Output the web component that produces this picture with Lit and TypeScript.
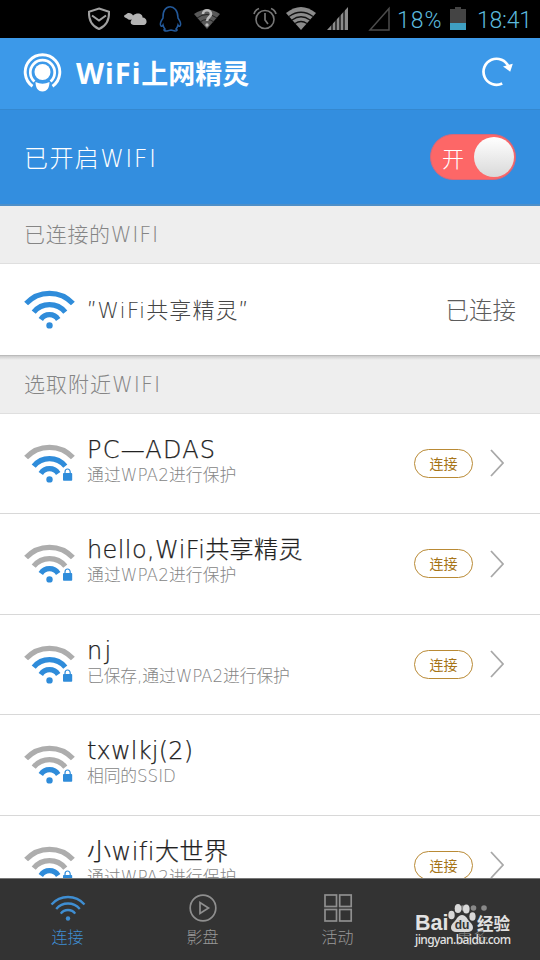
import { LitElement, html, css, svg, nothing } from "lit";
import { customElement, property } from "lit/decorators.js";

const arc = (r: number, dx: number, cx = 25.5, cy = 36) => {
  const y = (cy - Math.sqrt(r * r - dx * dx)).toFixed(2);
  return `M${cx - dx} ${y}A${r} ${r} 0 0 1 ${cx + dx} ${y}`;
};

@customElement("wifi-signal")
class WifiSignal extends LitElement {
  @property({ type: Number }) level = 3;
  @property({ type: Boolean }) locked = false;
  static styles = css`
    :host { display: block; width: 52px; height: 42px; flex: none; }
    svg { display: block; }
  `;
  render() {
    const on = "#2f8cda", off = "#adadad";
    const c = (n: number) => (this.level >= n ? on : off);
    return html`<svg width="52" height="42" viewBox="0 0 52 42" fill="none" stroke-width="5.2">
      <path d=${arc(31.7, 23.4)} stroke=${c(3)} />
      <path d=${arc(20.4, 15.8)} stroke=${c(2)} />
      <path d=${arc(10.3, 8.7)} stroke=${c(1)} />
      <circle cx="25.5" cy="36.4" r="3.2" fill=${on} />
      ${this.locked
        ? svg`<rect x="39" y="30" width="9.2" height="7.800" rx=".8" fill=${on} />
            <path d="M41 30.500v-1.600a2.600 2.900 0 0 1 5.200 0v1.600" stroke=${on} stroke-width="1.200" />`
        : nothing}
    </svg>`;
  }
}

interface Network {
  name: string;
  note: string;
  level: number;
  connect: boolean;
  spacing: number;
  noteSpacing: number;
}

const networks: Network[] = [
  { name: "PC—ADAS", note: "通过WPA2进行保护", level: 2, connect: true, spacing: 1.2, noteSpacing: 0.1 },
  { name: "hello,WiFi共享精灵", note: "通过WPA2进行保护", level: 1, connect: true, spacing: 0.4, noteSpacing: 0.1 },
  { name: "nj", note: "已保存,通过WPA2进行保护", level: 2, connect: true, spacing: 2.2, noteSpacing: -0.1 },
  { name: "txwlkj(2)", note: "相同的SSID", level: 1, connect: false, spacing: 0.2, noteSpacing: -0.1 },
  { name: "小wifi大世界", note: "通过WPA2进行保护", level: 1, connect: true, spacing: 0.5, noteSpacing: 0.1 },
];

@customElement("app-root")
class AppRoot extends LitElement {
  static styles = css`
    :host {
      display: flex; flex-direction: column; position: relative;
      width: 540px; height: 960px; overflow: hidden; background: #fff;
      font-family: "DejaVu Sans Light", "DejaVu Sans", "Noto Sans CJK SC", sans-serif;
      font-weight: 200;
    }
    * { box-sizing: border-box; }
    svg { display: block; flex: none; }
    .status { height: 37.5px; flex: none; background: #000; display: flex; align-items: center; color: #5cb9dc;
      font: 300 23px/37px Roboto, sans-serif; white-space: nowrap; }
    .pct { width: 46px; margin-left: 6px; letter-spacing: 1px; padding-top: 3px; }
    .charge { margin-left: 7px; }
    .time { margin-left: 11px; letter-spacing: -.2px; padding-top: 3px; }
    .top { height: 72px; flex: none; background: #3c99e9; border-bottom: 1.5px solid #3488d0; display: flex;
      align-items: center; padding: 0 27px 0 23px; color: #fff; }
    .brand { flex: 1; margin-left: 14px; font: 700 27px/40px "Noto Sans", "Noto Sans CJK SC", sans-serif; }
    .latin { font-size: 29px; letter-spacing: 1px; }
    .power { height: 96px; flex: none; background: #338edf; border-bottom: 2px solid #4e8fc8; display: flex;
      align-items: center; justify-content: space-between; padding: 0 24px; color: #fff; font-size: 24px; letter-spacing: 1.4px; }
    .switch { width: 86px; height: 46px; border-radius: 23px; background: #fd6767; border: 1.5px solid #d4687c; display: flex;
      align-items: center; justify-content: space-between; padding: 0 1px 0 11px; font-size: 22px; letter-spacing: 0; font-weight: 300; }
    .knob { width: 40px; height: 40px; border-radius: 50%; background: linear-gradient(#fff, #d9d9d9); }
    .section { height: 58px; flex: none; background: #eee; border-bottom: 1px solid #dfdfdf; padding-left: 24px;
      line-height: 59px; font-size: 21px; letter-spacing: .7px; color: #858585; }
    .section.near { background: linear-gradient(#ccc, #eee 4px); letter-spacing: 1px; }
    .current { height: 92px; flex: none; display: flex; align-items: center; padding: 1px 24px 0; color: #444;
      font-size: 22px; border-bottom: 1px solid #bbb; }
    .current .ssid { flex: 1; margin: -3px 0 0 11px; letter-spacing: 1.1px; }
    .state { font-size: 23.5px; color: #5c5c5c; margin-top: -2px; }
    .list { flex: 1; min-height: 0; overflow: hidden; }
    .row { height: 100.5px; border-bottom: 1.5px solid #d8d8d8; display: flex; align-items: center; padding: 0 36px 0 24px; }
    .row wifi-signal { margin-top: 1px; }
    .texts { flex: 1; margin-left: 11px; white-space: nowrap; }
    .name { font-size: 24px; line-height: 28px; color: #222; margin-top: -5px; -webkit-text-stroke: .25px #222; }
    .note { font-size: 16.8px; line-height: 22px; color: #858585; }
    .join { width: 59px; height: 29px; border: 1px solid #b98a35; border-radius: 15px; color: #a67416; font-size: 14px;
      font-weight: 400; line-height: 28px; text-align: center; margin-right: 17px; }
    .nav { height: 82.500px; flex: none; background: #333; border-top: 1px solid #777; display: grid; grid-template-columns: repeat(4, 1fr);
      color: #999; font-size: 16px; }
    .tab { display: flex; flex-direction: column; align-items: center; padding-top: 12px; gap: 1px; }
    .tab span { line-height: 24px; }
    .active { color: #3f8ed2; }
    .dim { color: #777; }
    .mark { position: absolute; left: 415px; top: 900px; width: 100px; color: #e2e2e2; }
    .markrow { display: flex; align-items: flex-end; height: 34px; white-space: nowrap; }
    .bai { font: 700 21.5px/22px "Liberation Sans", sans-serif; width: 33px; }
    .exp { font: 700 16.5px/22px "Noto Sans CJK SC", sans-serif; margin-left: 1px; }
    .site { font: 500 12px/16px "Noto Sans", sans-serif; letter-spacing: -.6px; margin-top: -2px; }
  `;

  statusIcons() {
    return html`<svg width="391" height="37" viewBox="0 0 391 37" fill="none">
      <path d="M99 8.5l10 3.2c.4 8-2.5 14-10 17.3-7.500-3.300-10.400-9.300-10-17.300z" stroke="#a0a0a0" stroke-width="2" />
      <path d="M92 15.500l7 5 7-5" stroke="#a0a0a0" stroke-width="2" />
      <path d="M134 25c-4 0-4-4-2-5.500-3 1-4-.5-6-1.500-3-1-2-3 0-3.500 1-2.500 6-2 7 1 5-4 10-1 9.500 2 5 0 5.500 7.500 1 7.500z" fill="#b4b4b4" />
      <path d="M163 18c-1-15 15-15 15 0 2 3 4 6 2 8-1 1-2-1-2-1-.5 2-1 3-2 4 2 1 1 2-1 2l-4-1-4 1c-3 0-4-1-2-2-1-1-1.500-2-2-4 0 0-1 2-2 1-2-2 0-5 2-8z" stroke="#23599a" stroke-width="1.500" />
      <path d="M194 14q13-9 26 0L207 29z" fill="#595959" />
      <path d="M197 18q10-7 20 0M200 22q7-5 14 0" stroke="#222" stroke-width="1" />
      <path d="M203 14c0-5 8-5 8 0 0 3-4 3-4 7" stroke="#bbb" stroke-width="2.600" /><circle cx="207" cy="25" r="1.700" fill="#bbb" />
      <circle cx="265" cy="19.500" r="9" stroke="#777" stroke-width="1.600" />
      <path d="M265 13v7l3 4M254 14q1-4 5-5.500M276 14q-1-4-5-5.500" stroke="#777" stroke-width="1.700" />
      <path d="M286 13q15-12 30 0L301 30z" fill="#8b8b8b" />
      <path d="M289 16.500q12-8.500 24 0M292 20q9-6.500 18 0M295 23.500q6-4 12 0" stroke="#111" stroke-width="1.300" />
      <path d="M327 30L348 7v23z" fill="#8b8b8b" />
      <path d="M332 22v9M336 18v13M340 13v18M344 9v22" stroke="#000" stroke-width="1.200" />
      <path d="M370 30L389 8.500V30z" stroke="#4c4c4c" stroke-width="1.500" />
    </svg>`;
  }

  render() {
    return html`
      <div class="status">
        ${this.statusIcons()}
        <span class="pct">18%</span>
        <svg class="charge" width="16" height="24" viewBox="0 0 16 24"><path d="M0 2h5V0h6v2h5v21H0z" fill="#444" /><path d="M0 16h16v7H0z" fill="#3f9fc2" /></svg>
        <span class="time">18:41</span>
      </div>
      <div class="top">
        <svg width="39" height="40" viewBox="0 0 39 40" fill="none" stroke="#fff" stroke-width="2.900">
          <path d="M9.500 33.200A17.300 17.300 0 1 1 29.500 33.200" />
          <path d="M11.500 28.600A12.200 12.200 0 1 1 27.500 28.600" stroke-width="2.700" />
          <circle cx="19.500" cy="19" r="8" fill="#fff" stroke="none" />
          <path d="M12.500 29q7 3.500 14 0c0 5-2 9.500-7 9.500s-7-4.500-7-9.500z" fill="#fff" stroke="none" />
        </svg>
        <div class="brand"><span class="latin">WiFi</span>上网精灵</div>
        <svg width="31" height="32" viewBox="0 0 31 32" fill="none">
          <path d="M20.200 26.500A13 13 0 1 1 26.600 10" stroke="#fff" stroke-width="2.700" />
          <path d="M21 9.500l9.800-2.800-2.600 8z" fill="#fff" />
        </svg>
      </div>
      <div class="power">
        <span>已开启WIFI</span>
        <div class="switch"><span>开</span><div class="knob"></div></div>
      </div>
      <div class="section">已连接的WIFI</div>
      <div class="current">
        <wifi-signal .level=${3}></wifi-signal>
        <span class="ssid">″WiFi共享精灵″</span>
        <span class="state">已连接</span>
      </div>
      <div class="section near">选取附近WIFI</div>
      <div class="list">
        ${networks.map((n) => html`<div class="row">
          <wifi-signal .level=${n.level} .locked=${true}></wifi-signal>
          <div class="texts">
            <div class="name" style="letter-spacing:${n.spacing}px">${n.name}</div>
            <div class="note" style="letter-spacing:${n.noteSpacing}px">${n.note}</div>
          </div>
          ${n.connect
            ? html`<div class="join">连接</div>
                <svg width="14" height="28" viewBox="0 0 14 28" fill="none"><path d="M1 1l12 13L1 27" stroke="#a8a8a8" stroke-width="1.800" /></svg>`
            : nothing}
        </div>`)}
      </div>
      <div class="nav">
        <div class="tab active">
          <svg width="36" height="34" viewBox="0 0 36 34" fill="none" stroke="#3f8ed2" stroke-width="2.300">
            <path d=${arc(22, 16.5, 18, 28)} /><path d=${arc(15.5, 11.8, 18, 28)} /><path d=${arc(9, 7.2, 18, 28)} />
            <circle cx="18" cy="27.500" r="2.200" fill="#3f8ed2" stroke="none" />
          </svg><span>连接</span>
        </div>
        <div class="tab">
          <svg width="34" height="34" viewBox="0 0 34 34" fill="none" stroke="#8f8f8f" stroke-width="1.700">
            <circle cx="17" cy="17" r="12.800" /><path d="M14 11.500v11l8.500-5.500z" />
          </svg><span>影盘</span>
        </div>
        <div class="tab">
          <svg width="34" height="34" viewBox="0 0 34 34" fill="none" stroke="#8f8f8f" stroke-width="1.700">
            <rect x="4" y="4" width="11.500" height="11.500" /><rect x="18.700" y="4" width="11.500" height="11.500" />
            <rect x="4" y="18.500" width="11.500" height="11.500" /><rect x="18.700" y="18.500" width="11.500" height="11.500" />
          </svg><span>活动</span>
        </div>
        <div class="tab dim">
          <svg width="34" height="34" viewBox="0 0 34 34" fill="#888"><circle cx="7" cy="17" r="2.800" /><circle cx="17.500" cy="17" r="2.800" /><circle cx="28" cy="17" r="2.800" /></svg>
          <span>更多</span>
        </div>
      </div>
      <div class="mark">
        <div class="markrow">
          <span class="bai">Bai</span>
          <svg width="28" height="32" viewBox="0 0 28 32" fill="#d8d8d8">
            <ellipse cx="3.500" cy="13" rx="3.200" ry="4.300" /><ellipse cx="10" cy="6.500" rx="3.300" ry="4.600" />
            <ellipse cx="18.300" cy="7" rx="3.300" ry="4.600" /><ellipse cx="24.500" cy="14.500" rx="3.100" ry="4.300" />
            <path d="M14 13c4 0 5 4 7.500 6.500 6 5 3.500 10.500-1.500 10.500H8c-5 0-7.500-5.500-1.500-10.500C9 17 10 13 14 13z" />
            <text x="14" y="27" text-anchor="middle" fill="#333" font-family="Liberation Sans" font-weight="700" font-size="12">du</text>
          </svg>
          <span class="exp">经验</span>
        </div>
        <div class="site">jingyan.baidu.com</div>
      </div>`;
  }
}
